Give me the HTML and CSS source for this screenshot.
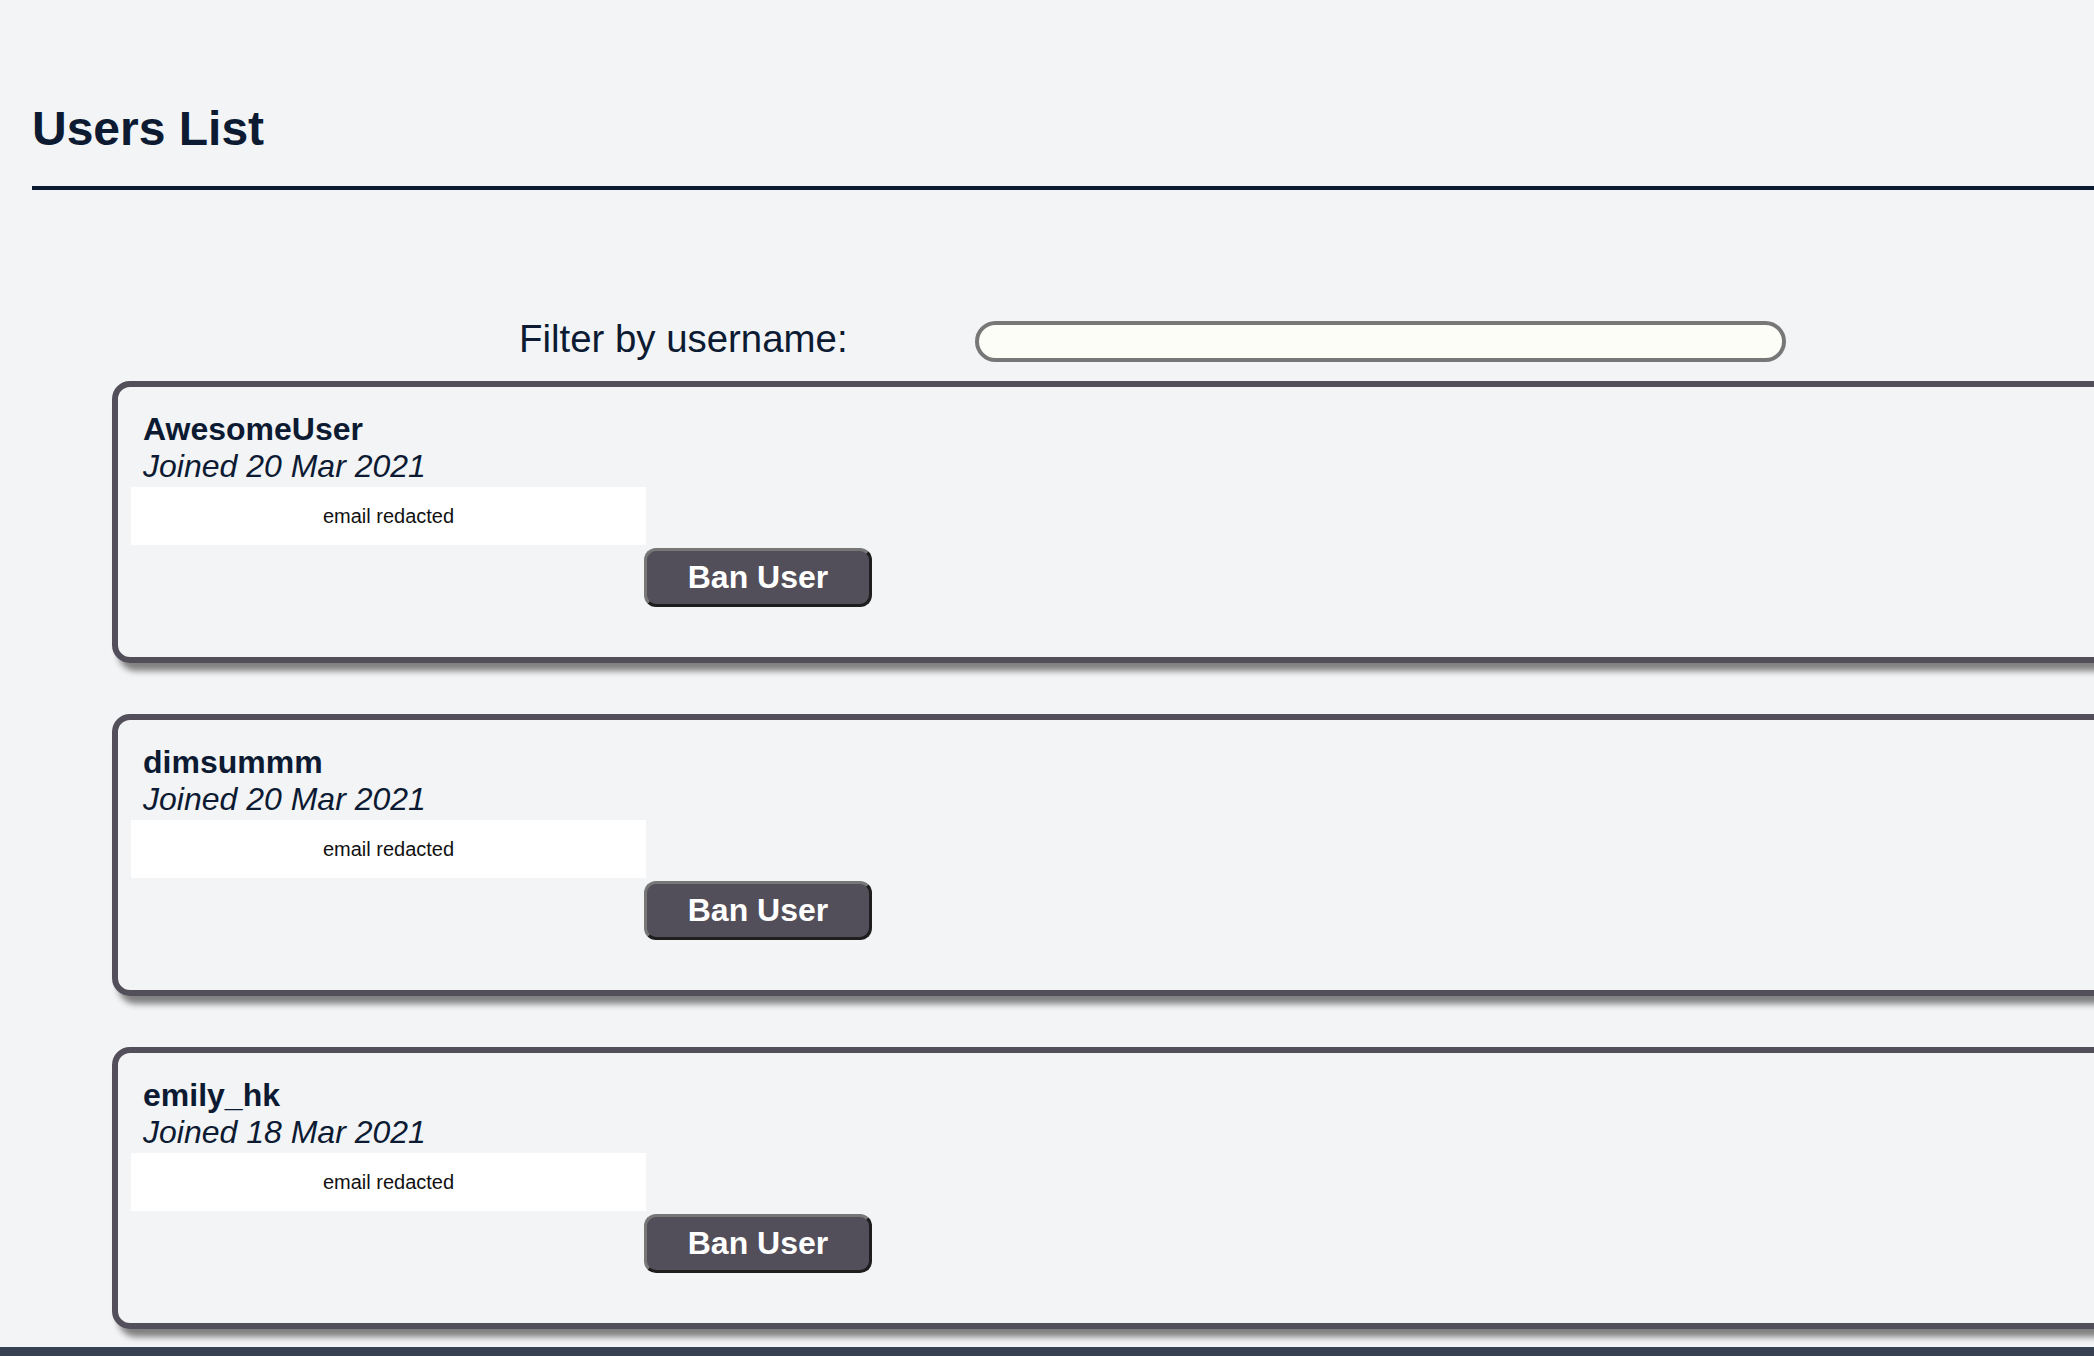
FILE: index.html
```html
<!DOCTYPE html>
<html lang="en">
<head>
<meta charset="utf-8">
<title>Users List</title>
<link rel="stylesheet" href="styles.css">
</head>
<body>
<div class="page">
  <header class="header">
    <h1 class="title">Users List</h1>
  </header>
  <form class="filter">
    <label class="filter-label" for="filter">Filter by username:</label>
    <input class="filter-input" id="filter" type="text">
  </form>
  <section class="users">
    <article class="card">
      <div class="name">AwesomeUser</div>
      <div class="joined">Joined 20 Mar 2021</div>
      <div class="email">email redacted</div>
      <button class="ban" type="button">Ban User</button>
    </article>
    <article class="card">
      <div class="name">dimsummm</div>
      <div class="joined">Joined 20 Mar 2021</div>
      <div class="email">email redacted</div>
      <button class="ban" type="button">Ban User</button>
    </article>
    <article class="card">
      <div class="name">emily_hk</div>
      <div class="joined">Joined 18 Mar 2021</div>
      <div class="email">email redacted</div>
      <button class="ban" type="button">Ban User</button>
    </article>
  </section>
  <footer class="footer"></footer>
</div>
</body>
</html>
```

FILE: styles.css
```css
html, body {
  margin: 0;
  padding: 0;
  height: 100%;
  overflow: hidden;
}
body {
  background: #f3f4f6;
  font-family: "Liberation Sans", Arial, sans-serif;
  color: #0c1a32;
}
.page {
  height: 1356px;
  overflow: hidden;
  display: flex;
  flex-direction: column;
}
.header {
  margin-left: 32px;
  padding-top: 101px;
  padding-bottom: 29px;
  border-bottom: 4px solid #0c1a32;
}
.title {
  margin: 0;
  font-size: 48px;
  line-height: 56px;
  font-weight: 700;
}
.filter {
  margin: 131px 0 0 519px;
  display: flex;
  align-items: flex-start;
  gap: 127px;
}
.filter-label {
  margin-top: -4px;
  font-size: 38.4px;
  line-height: 44px;
  color: #0c1a32;
  white-space: nowrap;
}
.filter-input {
  box-sizing: border-box;
  width: 811px;
  height: 41px;
  margin: 0;
  border: 4px solid #777777;
  border-radius: 21px;
  background: #fdfdf7;
  outline: none;
}
.users {
  display: flex;
  flex-direction: column;
  gap: 51px;
  margin-top: 19px;
}
.card {
  box-sizing: border-box;
  margin-left: 112px;
  margin-right: -200px;
  height: 282px;
  border: 6px solid #524e5a;
  border-radius: 18px;
  padding: 25px 13px 0 13px;
  box-shadow: 6px 8px 6px #808080;
  display: flex;
  flex-direction: column;
  align-items: flex-start;
}
.name {
  padding-left: 12px;
  font-size: 32px;
  line-height: 34px;
  font-weight: 700;
}
.joined {
  margin-top: 3px;
  padding-left: 12px;
  font-size: 32px;
  line-height: 34px;
  font-style: italic;
}
.email {
  margin-top: 4px;
  width: 515px;
  height: 58px;
  background: #ffffff;
  color: #111111;
  font-size: 20px;
  display: flex;
  align-items: center;
  justify-content: center;
}
.ban {
  box-sizing: border-box;
  margin: 3px 0 0 513px;
  width: 228px;
  height: 59px;
  padding: 0;
  background: #524e5a;
  color: #ffffff;
  font-family: "Liberation Sans", Arial, sans-serif;
  font-size: 32px;
  font-weight: 700;
  border: 3px solid;
  border-color: #777777 #1e1e1e #1e1e1e #777777;
  border-radius: 12px;
}
.footer {
  margin-top: 18px;
  height: 120px;
  flex-shrink: 0;
  background: #374151;
}
```
